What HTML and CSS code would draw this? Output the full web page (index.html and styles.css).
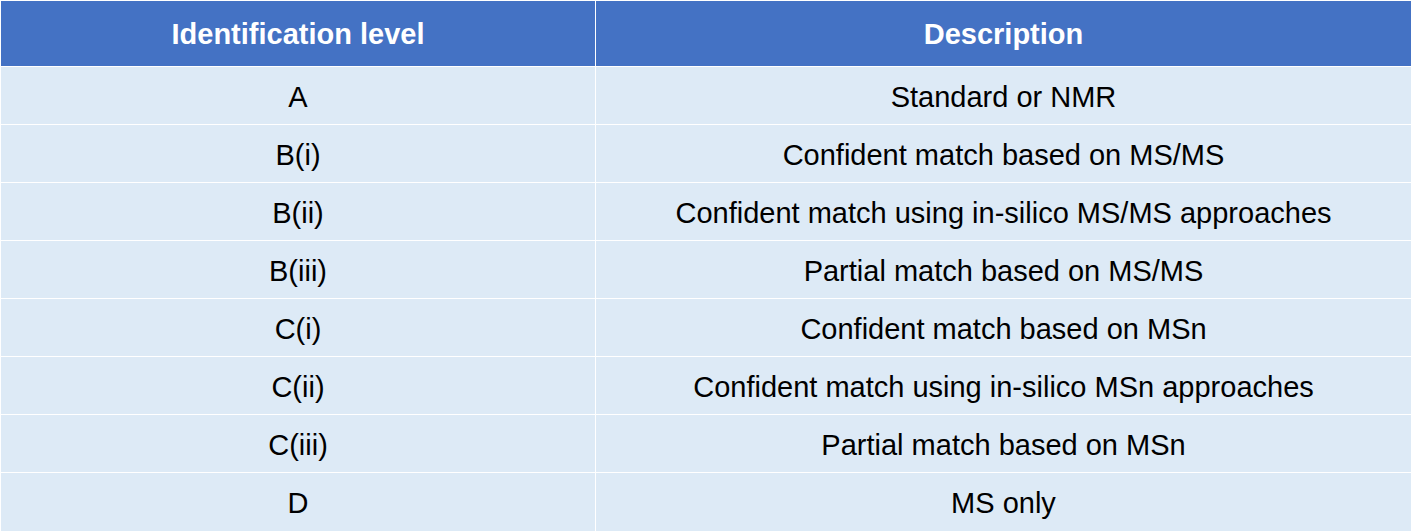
FILE: index.html
```html
<!DOCTYPE html>
<html>
<head>
<meta charset="utf-8">
<link rel="stylesheet" href="styles.css">
</head>
<body>
<table class="levels">
  <thead>
    <tr><th class="col-level">Identification level</th><th>Description</th></tr>
  </thead>
  <tbody>
    <tr><td>A</td><td>Standard or NMR</td></tr>
    <tr><td>B(i)</td><td>Confident match based on MS/MS</td></tr>
    <tr><td>B(ii)</td><td>Confident match using in-silico MS/MS approaches</td></tr>
    <tr><td>B(iii)</td><td>Partial match based on MS/MS</td></tr>
    <tr><td>C(i)</td><td>Confident match based on MSn</td></tr>
    <tr><td>C(ii)</td><td>Confident match using in-silico MSn approaches</td></tr>
    <tr><td>C(iii)</td><td>Partial match based on MSn</td></tr>
    <tr class="last"><td>D</td><td>MS only</td></tr>
  </tbody>
</table>
</body>
</html>
```

FILE: styles.css
```css
html, body {
  margin: 0;
  padding: 0;
  background: #ffffff;
}
body {
  padding: 1px 2px 0 1px;
  font-family: "Liberation Sans", Arial, sans-serif;
}
.levels {
  width: 1410px;
  border-collapse: collapse;
  table-layout: fixed;
}
.levels th, .levels td {
  text-align: center;
  vertical-align: middle;
  border: 1px solid #ffffff;
  line-height: 1;
}
.levels tr:first-child th { border-top: none; }
.levels th:first-child, .levels td:first-child { border-left: none; }
.levels th:last-child, .levels td:last-child { border-right: none; }
.levels th {
  background: #4472c4;
  color: #ffffff;
  font-weight: bold;
  font-size: 29px;
  height: 61px;
  padding: 3px 0 1px;
}
.levels .col-level { width: 594px; }
.levels td {
  background: #ddeaf6;
  color: #000000;
  font-size: 29px;
  height: 53px;
  padding: 4px 0 0;
}
.levels .last td {
  border-bottom: none;
  padding-bottom: 4px;
}
```
